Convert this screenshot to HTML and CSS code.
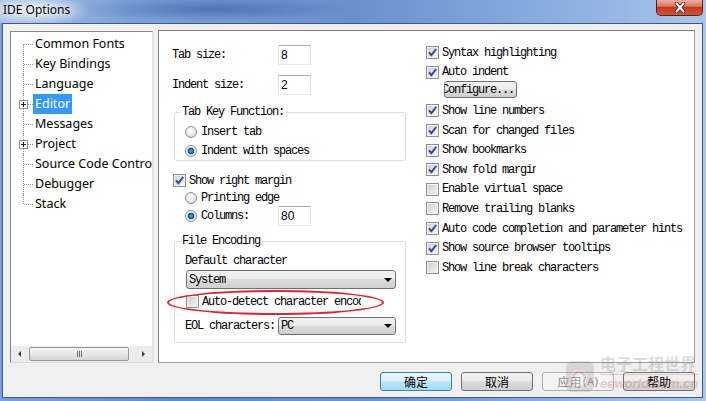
FILE: index.html
```html
<!DOCTYPE html>
<html lang="en">
<head>
    <meta charset="UTF-8">
    <meta name="viewport" content="width=device-width, initial-scale=1.0">
    <title>IDE Options</title>
    <link rel="stylesheet" href="styles.css">
</head>
<body>
<div class="window">
    <div class="titlebar">
        <span class="title">IDE Options</span>
        <span class="close">
            <svg width="14" height="11" viewBox="0 0 14 11">
                <path d="M3.5 1.5 L10.5 9.5 M10.5 1.5 L3.5 9.5" stroke="#5a1c12" stroke-width="3.6" stroke-linecap="round"/>
                <path d="M3.5 1.5 L10.5 9.5 M10.5 1.5 L3.5 9.5" stroke="#fff" stroke-width="2" stroke-linecap="round"/>
            </svg>
        </span>
    </div>

    <div class="client">
        <div class="main">
            <div class="tree">
                <ul class="tree-list">
                    <li><span>Common Fonts</span></li>
                    <li><span>Key Bindings</span></li>
                    <li><span>Language</span></li>
                    <li><i class="plus"></i><span class="selected">Editor</span></li>
                    <li><span>Messages</span></li>
                    <li><i class="plus"></i><span>Project</span></li>
                    <li><span>Source Code Control</span></li>
                    <li><span>Debugger</span></li>
                    <li><span>Stack</span></li>
                </ul>
                <div class="hscroll">
                    <span class="arrow"><i class="tri-left"></i></span>
                    <span class="thumb"><i></i><i></i><i></i></span>
                    <span class="arrow end"><i class="tri-right"></i></span>
                </div>
            </div>

            <div class="panel">
                <div class="col-left">
                    <div class="field">
                        <label class="field-label">Tab size:</label>
                        <input class="num" type="text" value="8" readonly>
                    </div>
                    <div class="field">
                        <label class="field-label">Indent size:</label>
                        <input class="num" type="text" value="2" readonly>
                    </div>

                    <div class="group tabkey">
                        <span class="legend">Tab Key Function:</span>
                        <div class="opt"><span class="rb"></span>Insert tab</div>
                        <div class="opt"><span class="rb on"></span>Indent with spaces</div>
                    </div>

                    <div class="opt margin-row">
                        <span class="cb"><svg width="11" height="11" viewBox="0 0 11 11"><path d="M2 5.3 L4.4 8.2 L9.2 2" fill="none" stroke="#2b4a92" stroke-width="1.9"/></svg></span>Show right margin
                    </div>
                    <div class="opt sub printing"><span class="rb"></span>Printing edge</div>
                    <div class="opt sub columns">
                        <span class="rb on"></span><span class="col-label">Columns:</span>
                        <input class="num" type="text" value="80" readonly>
                    </div>

                    <div class="group fileenc">
                        <span class="legend">File Encoding</span>
                        <div class="dc-label">Default character</div>
                        <div class="combo system"><span>System</span><i class="caret"></i></div>
                        <div class="opt autodetect"><span class="cb"></span><span class="clip">Auto-detect character encoding</span></div>
                        <div class="eol">
                            <span class="eol-label">EOL characters:</span>
                            <div class="combo pc"><span>PC</span><i class="caret"></i></div>
                        </div>
                        <div class="annot"></div>
                    </div>
                </div>

                <div class="col-right">
                    <div class="opt"><span class="cb"><svg width="11" height="11" viewBox="0 0 11 11"><path d="M2 5.3 L4.4 8.2 L9.2 2" fill="none" stroke="#2b4a92" stroke-width="1.9"/></svg></span>Syntax highlighting</div>
                    <div class="opt"><span class="cb"><svg width="11" height="11" viewBox="0 0 11 11"><path d="M2 5.3 L4.4 8.2 L9.2 2" fill="none" stroke="#2b4a92" stroke-width="1.9"/></svg></span>Auto indent</div>
                    <div class="cfg-btn"><span>Configure...</span></div>
                    <div class="opt"><span class="cb"><svg width="11" height="11" viewBox="0 0 11 11"><path d="M2 5.3 L4.4 8.2 L9.2 2" fill="none" stroke="#2b4a92" stroke-width="1.9"/></svg></span>Show line numbers</div>
                    <div class="opt"><span class="cb"><svg width="11" height="11" viewBox="0 0 11 11"><path d="M2 5.3 L4.4 8.2 L9.2 2" fill="none" stroke="#2b4a92" stroke-width="1.9"/></svg></span>Scan for changed files</div>
                    <div class="opt"><span class="cb"><svg width="11" height="11" viewBox="0 0 11 11"><path d="M2 5.3 L4.4 8.2 L9.2 2" fill="none" stroke="#2b4a92" stroke-width="1.9"/></svg></span>Show bookmarks</div>
                    <div class="opt"><span class="cb"><svg width="11" height="11" viewBox="0 0 11 11"><path d="M2 5.3 L4.4 8.2 L9.2 2" fill="none" stroke="#2b4a92" stroke-width="1.9"/></svg></span><span class="clip fold">Show fold margin</span></div>
                    <div class="opt"><span class="cb"></span>Enable virtual space</div>
                    <div class="opt"><span class="cb"></span>Remove trailing blanks</div>
                    <div class="opt"><span class="cb"><svg width="11" height="11" viewBox="0 0 11 11"><path d="M2 5.3 L4.4 8.2 L9.2 2" fill="none" stroke="#2b4a92" stroke-width="1.9"/></svg></span>Auto code completion and parameter hints</div>
                    <div class="opt"><span class="cb"><svg width="11" height="11" viewBox="0 0 11 11"><path d="M2 5.3 L4.4 8.2 L9.2 2" fill="none" stroke="#2b4a92" stroke-width="1.9"/></svg></span>Show source browser tooltips</div>
                    <div class="opt"><span class="cb"></span>Show line break characters</div>
                </div>
            </div>
        </div>

        <div class="buttons">
            <button class="btn default">确定</button>
            <button class="btn">取消</button>
            <button class="btn" disabled>应用<span class="acc">(A)</span></button>
            <button class="btn">帮助</button>
        </div>
    </div>

    <div class="watermark">
        <svg width="30" height="33" viewBox="0 0 30 33">
            <rect x="1" y="1" width="28" height="31" rx="6" fill="#8c8c8c"/>
            <circle cx="14" cy="18" r="8" fill="#f0f0f0"/>
            <path d="M8 18 A6 6 0 1 1 20 18" fill="none" stroke="#d23b3b" stroke-width="3"/>
        </svg>
        <div class="wm-text">
            <span class="wm-cn">电子工程世界</span>
            <span class="wm-en">eeworld.com.cn</span>
        </div>
    </div>
</div>
</body>
</html>
```

FILE: styles.css
```css
* {
    box-sizing: border-box;
}
body {
    margin: 0;
    width: 706px;
    height: 401px;
    overflow: hidden;
    font-family: "Noto Sans", sans-serif;
}
.window {
    position: relative;
    width: 706px;
    height: 401px;
    display: flex;
    flex-direction: column;
    background: linear-gradient(90deg, #7ba0d6 0, #5d89c9 25%, #6a93cf 55%, #8fb0e0 80%, #a9c5ea 100%);
}

/* title bar */
.titlebar {
    height: 23px;
    flex: none;
    display: flex;
    justify-content: space-between;
    align-items: flex-start;
    padding: 0 3px 0 2px;
    background:
        radial-gradient(ellipse 55px 16px at 36px 10px, rgba(255,255,255,.8), rgba(255,255,255,0)),
        radial-gradient(ellipse 140px 13px at 210px 9px, rgba(35,65,150,.45), rgba(35,65,150,0)),
        linear-gradient(90deg, #a4c0e6 0, #7ea3d8 18%, #6890cf 50%, #8cafe0 80%, #a9c5ea 100%);
}
.title {
    padding-left: 1px;
    font-size: 12px;
    line-height: 20px;
    color: #000;
    text-shadow: 0 0 6px #fff, 0 0 10px #fff;
}
.close {
    width: 47px;
    height: 16px;
    display: flex;
    align-items: center;
    justify-content: center;
    border: 1px solid #5e2016;
    border-top: none;
    border-radius: 0 0 5px 5px;
    background: linear-gradient(#eab0a2 0, #dc7a64 40%, #c8391c 50%, #d0543a 100%);
}

/* client area */
.client {
    flex: 1;
    margin: 0 3px 3px 2px;
    border: 1px solid #3f5b80;
    background: #f0f0f0;
    padding: 6px 7px 0 7px;
    display: flex;
    flex-direction: column;
}
.main {
    display: flex;
    gap: 5px;
    height: 333px;
    flex: none;
}

/* tree */
.tree {
    width: 144px;
    height: 332px;
    margin-top: 1px;
    border: 1px solid;
    border-color: #828790 #d9d9d9 #d9d9d9 #828790;
    background: #fff;
    display: flex;
    flex-direction: column;
    overflow: hidden;
}
.tree-list {
    list-style: none;
    margin: 0;
    padding: 2px 0 0;
    flex: 1;
    font-size: 12.5px;
    color: #000;
}
.tree-list li {
    position: relative;
    height: 20px;
    line-height: 20px;
    padding-left: 22px;
    white-space: nowrap;
}
.tree-list span {
    display: inline-block;
    padding: 0 2px;
}
.tree-list .selected {
    background: #3399ff;
    color: #fff;
}
.tree-list li::before {
    content: "";
    position: absolute;
    left: 13px;
    top: 10px;
    width: 9px;
    border-top: 1px dotted #9a9a9a;
}
.tree-list li::after {
    content: "";
    position: absolute;
    left: 12px;
    top: 0;
    bottom: 0;
    border-left: 1px dotted #9a9a9a;
}
.tree-list li:first-child::after {
    top: 10px;
}
.tree-list li:last-child::after {
    bottom: 10px;
}
.plus {
    position: absolute;
    left: 8px;
    top: 6px;
    width: 9px;
    height: 9px;
    z-index: 1;
    border: 1px solid #919191;
    background-color: #fff;
    background-image: linear-gradient(#222, #222), linear-gradient(#222, #222);
    background-size: 5px 1px, 1px 5px;
    background-position: center;
    background-repeat: no-repeat;
}
.hscroll {
    height: 16px;
    flex: none;
    display: flex;
    align-items: center;
    background: #ececec;
}
.arrow {
    width: 17px;
    height: 16px;
    display: flex;
    align-items: center;
    justify-content: center;
}
.arrow.end {
    margin-left: auto;
}
.tri-left {
    border-top: 3px solid transparent;
    border-bottom: 3px solid transparent;
    border-right: 3px solid #404040;
}
.tri-right {
    border-top: 3px solid transparent;
    border-bottom: 3px solid transparent;
    border-left: 3px solid #404040;
}
.thumb {
    margin-left: 1px;
    width: 100px;
    height: 14px;
    border: 1px solid #979797;
    border-radius: 2px;
    background: linear-gradient(#f6f6f6, #e6e6e6 50%, #d4d4d4);
    display: flex;
    justify-content: center;
    align-items: center;
    gap: 1px;
}
.thumb i {
    width: 1px;
    height: 6px;
    background: #6f6f6f;
}

/* options panel */
.panel {
    width: 537px;
    height: 333px;
    border: 1px solid #a0a0a0;
    border-left-color: #7f7f7f;
    border-top-color: #7f7f7f;
    background: #fff;
    padding: 14px 0 0 13px;
    display: flex;
    gap: 20px;
    font-family: "Liberation Mono", monospace;
    font-size: 12px;
    letter-spacing: -1.2px;
    color: #000;
}
.col-left {
    width: 234px;
    display: flex;
    flex-direction: column;
}
.col-right {
    width: 268px;
    margin-top: -2px;
    display: flex;
    flex-direction: column;
}
.field {
    display: flex;
    align-items: center;
    height: 20px;
}
.field + .field {
    margin-top: 10px;
}
.field-label {
    width: 106px;
}
.num {
    width: 33px;
    height: 20px;
    margin: 0;
    padding: 0 2px;
    border: 1px solid;
    border-color: #abadb3 #dbdfe6 #e3e9ef #e2e3ea;
    background: #fff;
    font: 12px "Liberation Sans", sans-serif;
    letter-spacing: 0;
    color: #000;
    outline: none;
}
.opt {
    display: flex;
    align-items: center;
    height: 19px;
    white-space: nowrap;
}
.col-right .opt {
    height: 19.6px;
}
.cb {
    width: 13px;
    height: 13px;
    flex: none;
    margin-right: 3px;
    border: 1px solid #8e8f8f;
    box-shadow: inset 0 0 0 1px #f2f2f2;
    background: linear-gradient(135deg, #cdcdcd, #f7f7f7);
}
.cb svg {
    display: block;
}
.rb {
    width: 12px;
    height: 12px;
    flex: none;
    margin-right: 4px;
    border: 1px solid #8e8f8f;
    border-radius: 50%;
    background: radial-gradient(circle at 45% 40%, #fff 0, #ececec 45%, #cfcfcf 100%);
}
.rb.on {
    background: radial-gradient(circle at 50% 50%, #62b8ec 0, #1d6db8 2px, #0c4a8c 3px, #e0e0e0 3.6px, #f6f6f6 5px);
}
.clip {
    overflow: hidden;
    width: 159px;
}
.clip.fold {
    width: 94px;
}

.group {
    position: relative;
    margin-left: 2px;
    width: 232px;
    border: 1px solid #d5dfe5;
    border-radius: 3px;
    padding: 0 9px 0 10px;
}
.legend {
    display: block;
    width: fit-content;
    height: 14px;
    line-height: 14px;
    margin: -8px 0 0 -5px;
    padding: 0 2px;
    background: #fff;
}
.tabkey {
    margin-top: 17px;
}
.tabkey .legend {
    margin-bottom: 3px;
}
.margin-row {
    margin-top: 10px;
    margin-left: 1px;
}
.sub {
    padding-left: 13px;
}
.printing {
    height: 16px;
}
.columns {
    height: 20px;
}
.col-label {
    width: 77px;
}
.fileenc {
    margin-top: 15px;
    padding-bottom: 7px;
}
.dc-label {
    margin-top: 6px;
    height: 14px;
    line-height: 14px;
}
.combo {
    display: flex;
    align-items: center;
    border: 1px solid #707070;
    border-radius: 3px;
    background: linear-gradient(#f2f2f2 0, #ebebeb 49%, #dddddd 50%, #cfcfcf 100%);
    padding-left: 2px;
}
.caret {
    margin-left: auto;
    margin-right: 3px;
    border-top: 4px solid #000;
    border-left: 4px solid transparent;
    border-right: 4px solid transparent;
}
.system {
    margin: 2px 0 0 1px;
    width: 210px;
    height: 19px;
}
.autodetect {
    margin: 3px 0 0 1px;
}
.eol {
    margin-top: 6px;
    height: 18px;
    display: flex;
    align-items: center;
}
.eol-label {
    width: 93px;
}
.pc {
    width: 118px;
    height: 18px;
}
.annot {
    position: absolute;
    left: -8px;
    top: 48px;
    width: 217px;
    height: 25px;
    border: 2px solid #e3232b;
    border-radius: 50%;
}
.cfg-btn {
    width: 73px;
    height: 17px;
    margin: -1px 0 3px 18px;
    border: 1px solid #707070;
    border-radius: 3px;
    background: linear-gradient(#f2f2f2 0, #ebebeb 49%, #dddddd 50%, #cfcfcf 100%);
    display: flex;
    justify-content: flex-end;
    align-items: center;
    padding-right: 2px;
    overflow: hidden;
    white-space: nowrap;
}

/* dialog buttons */
.buttons {
    margin-top: 9px;
    display: flex;
    justify-content: flex-end;
    gap: 9px;
}
.btn {
    width: 72px;
    height: 19px;
    padding: 0;
    border: 1px solid #707070;
    border-radius: 3px;
    background: linear-gradient(#f2f2f2 0, #ebebeb 49%, #dddddd 50%, #cfcfcf 100%);
    font: 12px "Noto Sans CJK SC", sans-serif;
    color: #000;
    display: flex;
    align-items: center;
    justify-content: center;
}
.btn.default {
    border-color: #3c7fb1;
    background: linear-gradient(#eaf6fd 0, #d9f0fc 49%, #bee6fd 50%, #a7d9f5 100%);
}
.btn:disabled {
    border-color: #adb2b5;
    background: #f4f4f4;
    color: #8a8a8a;
}
.acc {
    font-family: "Liberation Mono", monospace;
    font-size: 11px;
    letter-spacing: -1px;
}

/* site watermark */
.watermark {
    position: absolute;
    left: 565px;
    top: 352px;
    display: flex;
    gap: 5px;
    opacity: .25;
    pointer-events: none;
}
.watermark svg {
    margin-top: 8px;
}
.wm-text {
    display: flex;
    flex-direction: column;
}
.wm-cn {
    font: bold 16px/22px "Noto Sans CJK SC", sans-serif;
    color: #7a7a7a;
    border-bottom: 1px solid #d23b3b;
}
.wm-en {
    font: italic bold 13px/18px "Liberation Sans", sans-serif;
    color: #c84848;
}
```
